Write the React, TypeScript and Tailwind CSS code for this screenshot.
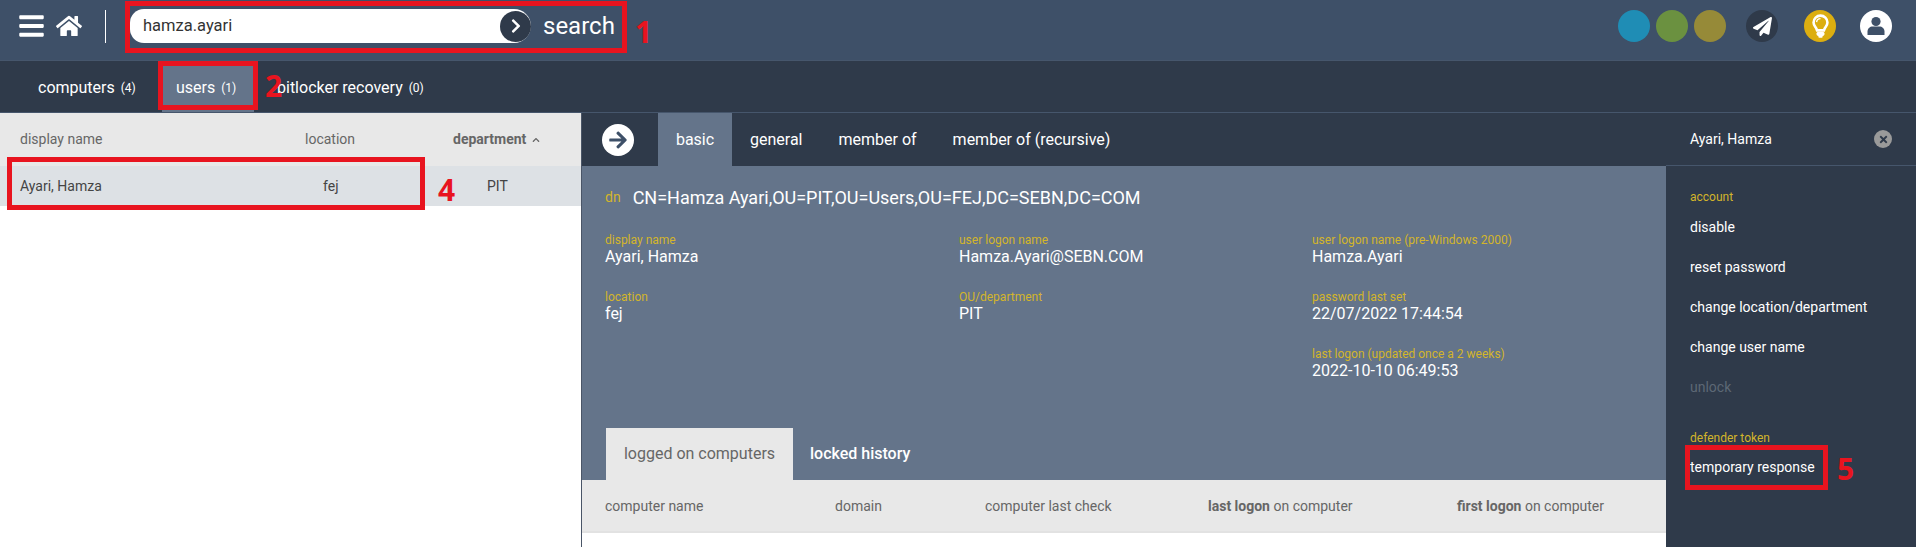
import { FaArrowRight, FaBars, FaChevronRight, FaChevronUp, FaHome, FaPaperPlane, FaTimes } from "react-icons/fa";

const details = [
  { label: "display name", value: "Ayari, Hamza" },
  { label: "user logon name", value: "Hamza.Ayari@SEBN.COM" },
  { label: "user logon name (pre-Windows 2000)", value: "Hamza.Ayari" },
  { label: "location", value: "fej" },
  { label: "OU/department", value: "PIT" },
  { label: "password last set", value: "22/07/2022 17:44:54" },
  null,
  null,
  { label: "last logon (updated once a 2 weeks)", value: "2022-10-10 06:49:53" },
];

function Marker({ className, children }: { className: string; children: string }) {
  return (
    <span className={`absolute font-['Open_Sans',sans-serif] text-[30px] leading-none font-bold text-[#e8141f] ${className}`}>
      {children}
    </span>
  );
}

function BulbIcon() {
  return (
    <svg viewBox="0 0 24 30" className="h-[26px] w-[21px]">
      <path
        d="M12 3a8 8 0 0 0-8 8c0 3.4 2.2 5 3.2 7 .4.8.6 1.4.8 2h8c.2-.6.4-1.2.8-2 1-2 3.2-3.6 3.2-7a8 8 0 0 0-8-8z"
        fill="none"
        stroke="white"
        strokeWidth="3"
      />
      <path d="M7.5 10.5a4.5 4.5 0 0 1 4.5-4" fill="none" stroke="white" strokeWidth="1.6" />
      <rect x="7.5" y="21.5" width="9" height="5" rx="2" fill="white" />
      <rect x="9.5" y="26" width="5" height="2.5" rx="1.2" fill="white" />
    </svg>
  );
}

function UserIcon() {
  return (
    <svg viewBox="0 0 24 24" className="h-[24px] w-[24px]">
      <circle cx="12" cy="7.5" r="4.6" fill="#3e5068" />
      <path d="M3.5 21v-3.5c0-3 2.4-5 5.2-5h6.6c2.8 0 5.2 2 5.2 5V21z" fill="#3e5068" />
    </svg>
  );
}

export default function App() {
  return (
    <div className="relative flex h-[547px] w-[1916px] flex-col overflow-hidden bg-white font-['Roboto',sans-serif]">
      <header className="flex h-[61px] shrink-0 items-center border-b border-[#46566c] bg-[#3e5068] pb-[8px] pl-[19px] pr-[24px] text-white">
        <FaBars className="h-[28px] w-[25px]" />
        <FaHome className="ml-[12px] h-[26px] w-[26px]" />
        <div className="ml-[23px] h-[33px] w-px bg-white" />
        <div className="ml-[24px] flex h-[34px] w-[401px] items-center justify-between rounded-l-[14px] rounded-r-[17px] bg-white pl-[13px]">
          <span className="text-[16.5px] text-[#333]">hamza.ayari</span>
          <span className="flex h-[31px] w-[31px] items-center justify-center rounded-full bg-[#2f3a4a]">
            <FaChevronRight className="h-[16px] w-[16px] text-white" />
          </span>
        </div>
        <span className="ml-[12px] text-[24px]">search</span>
        <div className="ml-auto flex items-center">
          <span className="h-[32px] w-[32px] rounded-full bg-[#1f8db5]" />
          <span className="ml-[6px] h-[32px] w-[32px] rounded-full bg-[#6b9140]" />
          <span className="ml-[6px] h-[32px] w-[32px] rounded-full bg-[#968a38]" />
          <span className="ml-[20px] flex h-[32px] w-[32px] items-center justify-center rounded-full bg-[#2f3a4a]">
            <FaPaperPlane className="h-[19px] w-[19px]" />
          </span>
          <span className="ml-[26px] flex h-[32px] w-[32px] items-center justify-center rounded-full bg-[#dcae10]">
            <BulbIcon />
          </span>
          <span className="ml-[24px] flex h-[32px] w-[32px] items-center justify-center rounded-full bg-white">
            <UserIcon />
          </span>
        </div>
      </header>

      <nav className="flex h-[52px] shrink-0 items-stretch border-b border-[#46566c] bg-[#2f3a4a] pl-[24px] pt-[2px] text-[16px] text-white">
        <div className="flex w-[138px] items-center px-[14px]">
          computers <span className="ml-[6px] text-[12px]">(4)</span>
        </div>
        <div className="flex w-[92px] items-center bg-[#64748a] px-[14px]">
          users <span className="ml-[6px] text-[12px]">(1)</span>
        </div>
        <div className="flex items-center pl-[23px]">
          bitlocker recovery <span className="ml-[6px] text-[12px]">(0)</span>
        </div>
      </nav>

      <div className="flex min-h-0 flex-1">
        <section className="w-[581px] shrink-0 text-[14px]">
          <div className="grid h-[53px] grid-cols-[285px_148px_1fr] items-center bg-[#e8e8e8] pl-[20px] text-[#666]">
            <span>display name</span>
            <span>location</span>
            <span className="flex items-center font-bold">
              department <FaChevronUp className="ml-[6px] h-[8px] w-[8px]" />
            </span>
          </div>
          <div className="grid h-[40px] grid-cols-[285px_148px_1fr] items-center bg-[#dde1e5] pl-[20px] text-[#444]">
            <span>Ayari, Hamza</span>
            <span className="pl-[18px]">fej</span>
            <span className="pl-[34px]">PIT</span>
          </div>
        </section>

        <section className="flex w-[1085px] shrink-0 flex-col border-l border-[#4a5567]">
          <div className="flex h-[53px] shrink-0 items-stretch bg-[#2f3a4a] text-[16px] text-white">
            <div className="flex w-[76px] items-center pl-[20px]">
              <span className="flex h-[32px] w-[32px] items-center justify-center rounded-full bg-white">
                <FaArrowRight className="h-[20px] w-[20px] text-[#3e5068]" />
              </span>
            </div>
            <div className="flex w-[74px] items-center justify-center bg-[#64748a]">basic</div>
            <div className="ml-[18px] flex items-center">general</div>
            <div className="ml-[36px] flex items-center">member of</div>
            <div className="ml-[36px] flex items-center">member of (recursive)</div>
          </div>

          <div className="flex h-[262px] shrink-0 flex-col bg-[#64748a] pl-[23px] text-white">
            <div className="mt-[19px] flex h-[24px] items-center">
              <span className="text-[14px] text-[#d3b52a]">dn</span>
              <span className="ml-[12px] text-[18px]">CN=Hamza Ayari,OU=PIT,OU=Users,OU=FEJ,DC=SEBN,DC=COM</span>
            </div>
            <div className="mt-[24px] grid grid-cols-[354px_353px_1fr] auto-rows-[57px]">
              {details.map((d, i) =>
                d ? (
                  <div key={i}>
                    <div className="text-[12px] leading-[14px] text-[#d3b52a]">{d.label}</div>
                    <div className="text-[16px] leading-[19px]">{d.value}</div>
                  </div>
                ) : (
                  <div key={i} />
                )
              )}
            </div>
          </div>

          <div className="flex h-[52px] shrink-0 items-stretch bg-[#64748a] pl-[24px] text-[16px]">
            <div className="flex w-[187px] items-center justify-center bg-[#e8e8e8] text-[#666]">logged on computers</div>
            <div className="ml-[17px] flex items-center font-medium text-white">locked history</div>
          </div>
          <div className="grid h-[53px] shrink-0 grid-cols-[230px_150px_223px_249px_1fr] items-center border-b-2 border-[#e2e2e2] bg-[#e8e8e8] pl-[23px] pt-[1px] text-[14px] text-[#666]">
            <span>computer name</span>
            <span>domain</span>
            <span>computer last check</span>
            <span><b>last logon</b> on computer</span>
            <span><b>first logon</b> on computer</span>
          </div>
        </section>

        <aside className="flex flex-1 flex-col bg-[#2f3a4a] pl-[24px] text-[14px] text-white">
          <div className="-ml-[24px] flex h-[53px] shrink-0 items-center justify-between border-b border-[#46566c] pl-[24px] pr-[24px]">
            <span>Ayari, Hamza</span>
            <span className="flex h-[18px] w-[18px] items-center justify-center rounded-full bg-[#9a9a9a]">
              <FaTimes className="h-[11px] w-[11px] text-[#2f3a4a]" />
            </span>
          </div>
          <div className="mt-[23px] text-[12px] leading-[16px] text-[#d3b52a]">account</div>
          <div className="mt-[14px] leading-[16px]">disable</div>
          <div className="mt-[24px] leading-[16px]">reset password</div>
          <div className="mt-[24px] leading-[16px]">change location/department</div>
          <div className="mt-[24px] leading-[16px]">change user name</div>
          <div className="mt-[24px] leading-[16px] text-[#5d6875]">unlock</div>
          <div className="mt-[35px] text-[12px] leading-[16px] text-[#d3b52a]">defender token</div>
          <div className="mt-[13px] leading-[16px]">temporary response</div>
        </aside>
      </div>

      <div className="absolute left-[125px] top-[1px] h-[52px] w-[502px] border-[5px] border-[#e8141f]" />
      <div className="absolute left-[158px] top-[61px] h-[49px] w-[100px] border-[5px] border-[#e8141f]" />
      <div className="absolute left-[7px] top-[157px] h-[53px] w-[418px] border-[5px] border-[#e8141f]" />
      <div className="absolute left-[1685px] top-[445px] h-[45px] w-[143px] border-[5px] border-[#e8141f]" />
      <Marker className="left-[635px] top-[17px]">1</Marker>
      <Marker className="left-[265px] top-[71px]">2</Marker>
      <Marker className="left-[438px] top-[175px]">4</Marker>
      <Marker className="left-[1837px] top-[454px]">5</Marker>
    </div>
  );
}
